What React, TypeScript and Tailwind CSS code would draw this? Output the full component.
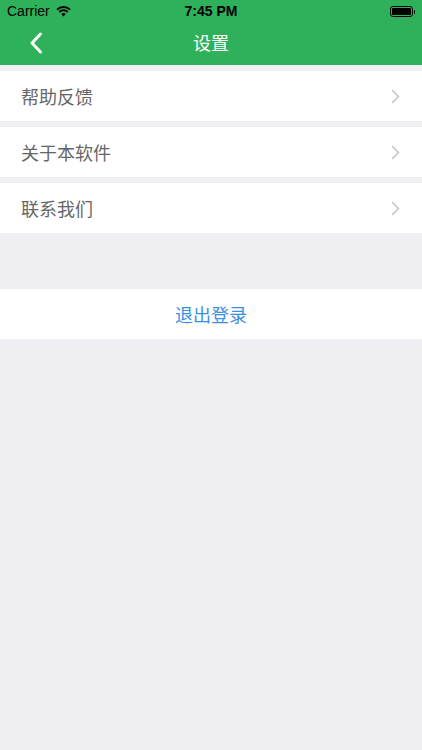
import React from 'react';

const items = ['帮助反馈', '关于本软件', '联系我们'];

const font = { fontFamily: '"Noto Sans CJK SC", "Liberation Sans", sans-serif' };

const Chevron: React.FC = () => (
  <svg width="9" height="15" viewBox="0 0 9 15" fill="none">
    <path d="M1.5 1.5 L7.5 7.5 L1.5 13.5" stroke="#c4c4c8" strokeWidth="1.6" strokeLinecap="round" strokeLinejoin="round" />
  </svg>
);

const StatusBar: React.FC = () => (
  <div className="relative h-[21px] flex items-center pt-[2px] px-[7px] text-black">
    <span className="text-[14px] font-['Liberation_Sans',sans-serif]">Carrier</span>
    <svg className="ml-[6px]" width="15" height="11" viewBox="0 0 15 11">
      <path d="M7.5 10.5 L5.2 8 A3.3 3.3 0 0 1 9.8 8 Z" fill="#000" />
      <path d="M3.3 6 A6 6 0 0 1 11.7 6" stroke="#000" strokeWidth="1.9" fill="none" />
      <path d="M1 3.7 A9.2 9.2 0 0 1 14 3.7" stroke="#000" strokeWidth="1.9" fill="none" />
    </svg>
    <span className="absolute left-0 right-0 text-center text-[14px] font-bold font-['Liberation_Sans',sans-serif]">7:45 PM</span>
    <div className="ml-auto flex items-center">
      <div className="w-[23px] h-[11px] rounded-[3px] border border-black p-[1px]">
        <div className="w-full h-full bg-black rounded-[1px]" />
      </div>
      <div className="w-[1.5px] h-[4px] bg-black ml-[1px] rounded-r-sm" />
    </div>
  </div>
);

export default function App() {
  return (
    <div className="w-[422px] h-[750px] bg-[#efeff4] overflow-hidden" style={font}>
      <div className="bg-[#2fb05a]">
        <StatusBar />
        <div className="relative h-[44px] flex items-center justify-center pb-[2px]">
          <svg className="absolute left-[29px] top-[11px]" width="14" height="22" viewBox="0 0 14 22" fill="none">
            <path d="M11.5 2 L3 11 L11.5 20" stroke="#fff" strokeWidth="3" strokeLinecap="round" strokeLinejoin="round" />
          </svg>
          <span className="text-white text-[18px]">设置</span>
        </div>
      </div>

      <div className="pt-[6px] flex flex-col gap-[6px]">
        {items.map((label) => (
          <div key={label} className="h-[50px] bg-white flex items-center pl-[21px] pr-[22px]">
            <span className="text-[18px] text-[#666666] flex-1">{label}</span>
            <Chevron />
          </div>
        ))}
      </div>

      <div className="mt-[56px] h-[50px] bg-white flex items-center justify-center">
        <span className="text-[18px] text-[#3b8fe0]">退出登录</span>
      </div>
    </div>
  );
}
